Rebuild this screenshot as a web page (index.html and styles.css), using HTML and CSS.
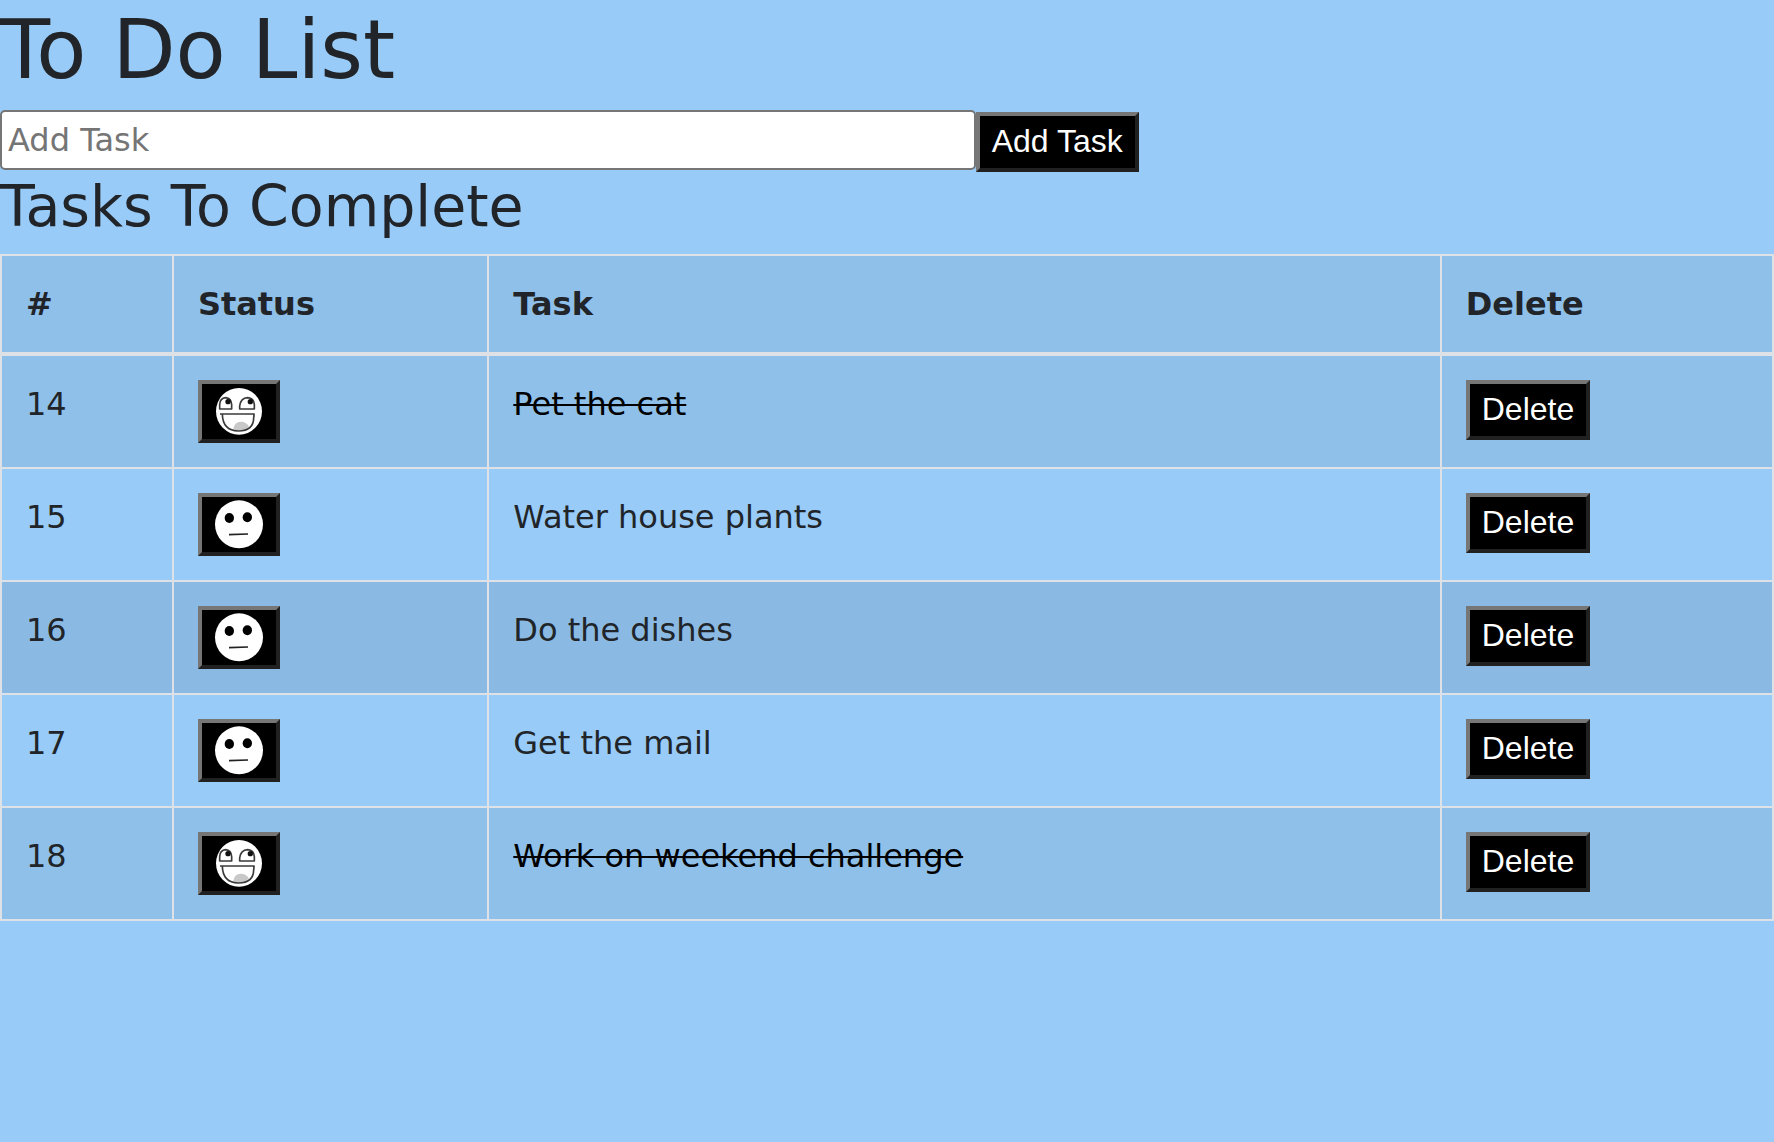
FILE: index.html
```html
<!DOCTYPE html>
<html lang="en">
<head>
<meta charset="utf-8">
<title>To Do List</title>
<link rel="stylesheet" href="styles.css">
</head>
<body>
<svg class="sprites" aria-hidden="true">
  <symbol id="happy" viewBox="0 0 150 153">
    <ellipse cx="75" cy="76" rx="69" ry="70" fill="#fff"/>
    <path d="M58 129Q61 108 80 107Q97 107 105 121Q93 134 73 133Q64 132 58 129Z" fill="#c8c8c8"/>
    <g fill="none" stroke="#3a3a3a" stroke-width="5" stroke-linejoin="round">
      <path d="M17 69V56Q18 36 35 35Q52 37 53 56V69Z"/>
      <path d="M77 69V60Q80 36 101 35Q120 37 121 56V69Z"/>
      <path d="M18 84H122"/>
      <path d="M25 84Q26 134 73 135Q119 134 119 95Q121 90 119 84"/>
    </g>
    <circle cx="42" cy="47" r="8" fill="#111"/>
    <circle cx="109" cy="47" r="8" fill="#111"/>
  </symbol>
  <symbol id="neutral" viewBox="0 0 150 153">
    <circle cx="75" cy="76" r="72" fill="#fff"/>
    <ellipse cx="46" cy="57" rx="14" ry="15"/>
    <ellipse cx="100" cy="55" rx="14" ry="15"/>
    <path d="M45 107L102 105" stroke="#222" stroke-width="5"/>
  </symbol>
</svg>
<h1 class="title">To Do List</h1>
<form class="add-form">
  <input class="task-input" type="text" placeholder="Add Task" aria-label="Add Task">
  <button class="btn" type="button">Add Task</button>
</form>
<h3 class="subtitle">Tasks To Complete</h3>
<table class="tasks">
  <colgroup><col class="col-id"><col class="col-status"><col><col class="col-delete"></colgroup>
  <thead>
    <tr><th scope="col">#</th><th scope="col">Status</th><th scope="col">Task</th><th scope="col">Delete</th></tr>
  </thead>
  <tbody>
    <tr>
      <td>14</td>
      <td><button class="btn btn-status" type="button" aria-label="Mark incomplete"><svg class="face"><use href="#happy"/></svg></button></td>
      <td class="done">Pet the cat</td>
      <td><button class="btn" type="button">Delete</button></td>
    </tr>
    <tr>
      <td>15</td>
      <td><button class="btn btn-status" type="button" aria-label="Mark complete"><svg class="face"><use href="#neutral"/></svg></button></td>
      <td>Water house plants</td>
      <td><button class="btn" type="button">Delete</button></td>
    </tr>
    <tr class="active">
      <td>16</td>
      <td><button class="btn btn-status" type="button" aria-label="Mark complete"><svg class="face"><use href="#neutral"/></svg></button></td>
      <td>Do the dishes</td>
      <td><button class="btn" type="button">Delete</button></td>
    </tr>
    <tr>
      <td>17</td>
      <td><button class="btn btn-status" type="button" aria-label="Mark complete"><svg class="face"><use href="#neutral"/></svg></button></td>
      <td>Get the mail</td>
      <td><button class="btn" type="button">Delete</button></td>
    </tr>
    <tr>
      <td>18</td>
      <td><button class="btn btn-status" type="button" aria-label="Mark incomplete"><svg class="face"><use href="#happy"/></svg></button></td>
      <td class="done">Work on weekend challenge</td>
      <td><button class="btn" type="button">Delete</button></td>
    </tr>
  </tbody>
</table>
</body>
</html>
```
FILE: styles.css
```css
* {
  box-sizing: border-box;
}

body {
  margin: 0;
  background: #98cbf7;
  color: #212529;
  font: 32px/48px Verdana, "DejaVu Sans", sans-serif;
}

.sprites {
  display: none;
}

.title {
  margin: 0 0 10px;
  font-size: 82px;
  font-weight: 400;
  line-height: 100px;
}

.add-form {
  display: flex;
  align-items: flex-end;
  height: 62px;
}

.task-input {
  align-self: flex-start;
  width: 55%;
  height: 60px;
  padding: 2px 6px;
  border: 2px solid #767676;
  border-radius: 5px;
  background: #fff;
  font: inherit;
}

.task-input::placeholder {
  color: #757575;
}

.btn {
  height: 60px;
  padding: 2px 12px 4px;
  border: 4px solid;
  border-color: #767676 #212121 #212121 #767676;
  border-radius: 0;
  background: #000;
  color: #fff;
  font: 32px "Liberation Sans", Arial, sans-serif;
}

.btn-status {
  height: auto;
  padding: 2px 12px;
}

.face {
  display: block;
  width: 50px;
  height: 51px;
}

.subtitle {
  margin: 0 0 14px;
  font-size: 57px;
  font-weight: 400;
  line-height: 68px;
}

.tasks {
  width: 100%;
  table-layout: fixed;
  border-collapse: collapse;
}

.col-id {
  width: 9.7%;
}

.col-status {
  width: 17.8%;
}

.col-delete {
  width: 18.75%;
}

.tasks th,
.tasks td {
  padding: 24px;
  border: 2px solid #dee2e6;
  text-align: left;
  vertical-align: top;
}

.tasks thead th {
  border-bottom-width: 4px;
}

.tasks thead tr,
.tasks tbody tr:nth-child(odd) {
  background: #8ec0ea;
}

.tasks tbody tr.active:nth-child(odd) {
  background: #8abae3;
}

.tasks .btn {
  display: block;
}

.done {
  color: #000;
  text-decoration: line-through 2px;
}
```
